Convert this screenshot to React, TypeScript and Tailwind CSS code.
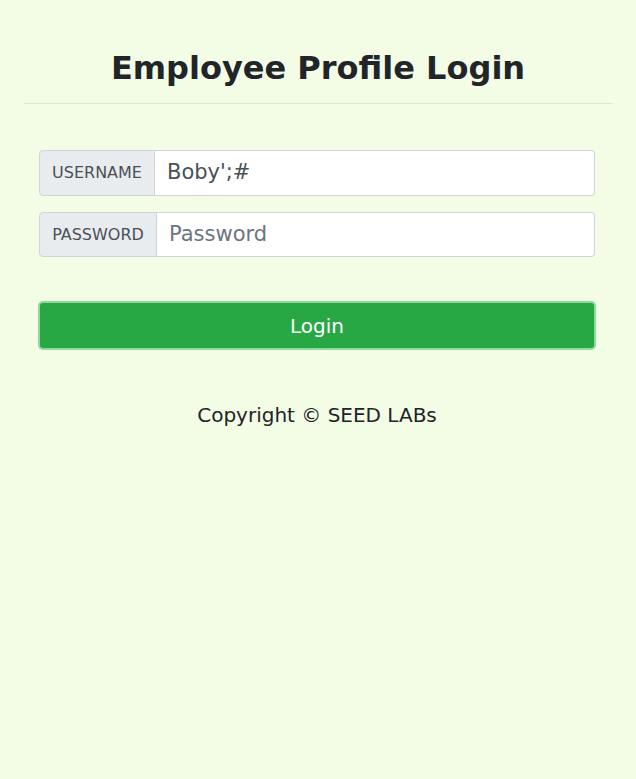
export default function App() {
  return (
    <main className="min-h-screen w-full bg-[#f3fce4] font-['DejaVu_Sans',sans-serif] text-[#212529]">
      <div className="px-6 pt-[46px]">
        <h1 className="text-center text-[32px] font-bold leading-[44px]">Employee Profile Login</h1>
        <hr className="mt-[13px] border-t border-[#dfe3d8]" />
      </div>
      <div className="pl-[39px] pr-[41px] pt-[46px]">
        <div className="flex h-[46px] w-full">
          <span className="flex w-[116px] items-center justify-center rounded-l-[4px] border border-[#ced4da] bg-[#e9ecef] text-[16px] text-[#495057]">
            USERNAME
          </span>
          <input
            className="flex-1 rounded-r-[4px] border border-l-0 border-[#ced4da] bg-white px-3 text-[21px] text-[#495057] outline-none"
            defaultValue="Boby';#"
          />
        </div>
        <div className="mt-4 flex h-[45px] w-full">
          <span className="flex w-[118px] items-center justify-center rounded-l-[4px] border border-[#ced4da] bg-[#e9ecef] text-[16px] text-[#495057]">
            PASSWORD
          </span>
          <input
            type="password"
            className="flex-1 rounded-r-[4px] border border-l-0 border-[#ced4da] bg-white px-3 text-[21px] text-[#495057] placeholder:text-[#6c757d] outline-none"
            placeholder="Password"
          />
        </div>
        <button className="-mx-px mt-[44px] flex h-[49px] w-[calc(100%+2px)] items-center justify-center rounded-[5px] border-2 border-[#8fd99f] bg-[#28a745] text-[20px] text-white">
          Login
        </button>
        <p className="mt-[50px] text-center text-[20px]">Copyright © SEED LABs</p>
      </div>
    </main>
  )
}
